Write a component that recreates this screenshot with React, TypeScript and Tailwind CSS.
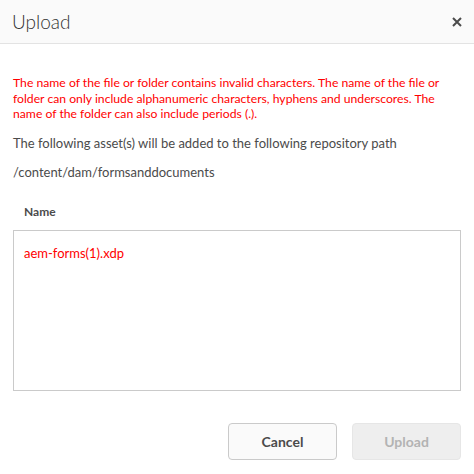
import React from "react";

export default function App() {
  return (
    <div className="w-[474px] h-[474px] bg-white flex flex-col" style={{ fontFamily: "Lato, 'Open Sans', sans-serif" }}>
      <div className="h-[44px] bg-[#fafafa] border-b border-[#e3e3e3] flex items-center justify-between pl-[12px] pr-[12px] shrink-0">
        <span className="text-[19px] font-light text-[#323232] leading-none">Upload</span>
        <svg width="10" height="10" viewBox="0 0 10 10">
          <path d="M1 1 L9 9 M9 1 L1 9" stroke="#4b4b4b" strokeWidth="2" strokeLinecap="butt" />
        </svg>
      </div>
      <div className="px-[13px] pt-[31px] flex flex-col">
        <p className="text-[12.2px] leading-[15.5px] text-[#ff0000] pr-[12px]">
          The name of the file or folder contains invalid characters. The name of the file or folder can only include alphanumeric characters, hyphens and underscores. The name of the folder can also include periods (.).
        </p>
        <p className="text-[13px] leading-[16px] text-[#4b4b4b] mt-[13px]">
          The following asset(s) will be added to the following repository path
        </p>
        <p className="text-[13px] leading-[16px] text-[#4b4b4b] mt-[13px]">/content/dam/formsanddocuments</p>
        <p className="text-[12px] leading-[16px] font-bold text-[#4b4b4b] mt-[24px] pl-[11px]">Name</p>
        <div className="mt-[10px] h-[161px] border border-[#cacaca] px-[10px] pt-[14px]">
          <p className="text-[13px] leading-[16px] text-[#ff0000]">aem-forms(1).xdp</p>
        </div>
        <div className="flex justify-end gap-[15px] mt-[32px]">
          <button className="w-[109px] h-[37px] rounded-[4px] border border-[#cacaca] bg-[#fafafa] text-[14px] font-bold text-[#4b4b4b]">Cancel</button>
          <button className="w-[109px] h-[37px] rounded-[4px] border border-[#e6e6e6] bg-[#eeeeee] text-[14px] font-bold text-[#b3b3b3]">Upload</button>
        </div>
      </div>
    </div>
  );
}
